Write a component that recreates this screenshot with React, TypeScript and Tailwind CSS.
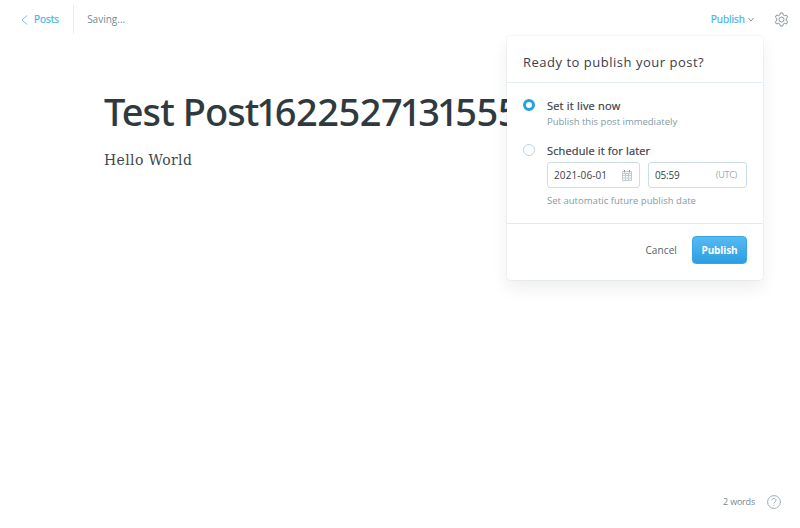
import React from 'react';

function GearIcon() {
  return (
    <svg width="15" height="15" viewBox="0 0 24 24" fill="none" stroke="#738a94" strokeWidth="1.4" strokeLinejoin="round">
      <path d="M9.500 4.500L10 1.500h4l.5 3 2.500 1.400 2.900-1.100 2 3.500-2.400 1.900v3.600l2.400 1.900-2 3.500-2.900-1.100-2.500 1.400-.5 3h-4l-.5-3L7 18.100l-2.900 1.100-2-3.500 2.400-1.900v-3.600L2.100 8.300l2-3.500L7 5.900z" />
      <circle cx="12" cy="12" r="4" />
    </svg>
  );
}

function CalendarIcon() {
  return (
    <svg width="10" height="11" viewBox="0 0 10 11" fill="none" stroke="#c0ccd2" strokeWidth="1">
      <path d="M.5 1.500h9v9h-9zM.5 3.500h9M3.500 4v6M6.500 4v6M1 5.500h8M1 8h8" />
      <path d="M2.500 0v2.500M7.500 0v2.500" stroke="#8fa1aa" />
    </svg>
  );
}

// Kerns the figure one tighter against its neighbours.
function Headline({ text }: { text: string }) {
  return (
    <h1 className="whitespace-nowrap font-['Noto_Sans','Open_Sans',sans-serif] text-[38px] font-medium leading-[52px] tracking-[-0.95px] text-[#303a3e]">
      {text.split(/(?=\d)|(?=t\d)/).map((part, index, parts) => {
        const beforeOne = parts[index + 1] === '1';
        if (part === '1') return <span key={index} className="tracking-[-3.400px]">{part}</span>;
        if (beforeOne) return <span key={index} className="tracking-[-2.900px]">{part}</span>;
        return <span key={index} className={/\d/.test(part) ? 'tracking-[-0.500px]' : 'tracking-[-0.950px]'}>{part}</span>;
      })}
    </h1>
  );
}

function PublishMenu() {
  return (
    <section className="absolute left-[507px] top-[36px] flex h-[244px] w-[256px] flex-col rounded-[4px] bg-white text-[#394047] shadow-[0_0_0_1px_rgba(99,114,130,0.06),0_8px_16px_rgba(27,39,51,0.08)]">
      <header className="flex h-[47px] items-center border-b border-[#e3edf3] px-4 pt-[5px]">
        <h2 className="text-[13px] leading-5 tracking-[0.51px]">Ready to publish your post?</h2>
      </header>
      <div className="flex h-[141px] flex-col border-b border-[#e3ebf0] px-4 pt-[15px]">
        <div className="flex h-[46px] gap-3">
          <span className="mt-px h-3 w-3 rounded-full border-[3px] border-[#26a0e5] bg-white" />
          <div className="flex flex-col">
            <span className="text-[11px] leading-[15px] tracking-[0.2px] [-webkit-text-stroke:0.2px_#394047]">Set it live now</span>
            <span className="mt-[2px] text-[9.500px] leading-[14px] text-[#829aa6]">Publish this post immediately</span>
          </div>
        </div>
        <div className="flex gap-3">
          <span className="h-3 w-3 shrink-0 rounded-full border border-[#bdd5e4] bg-white" />
          <div className="flex flex-col">
            <span className="-mt-px text-[11px] leading-[15px] tracking-[0.14px] [-webkit-text-stroke:0.2px_#394047]">Schedule it for later</span>
            <div className="mt-[4px] flex gap-2 text-[10px]">
              <div className="flex h-[26px] w-[93px] items-center justify-between rounded-[3px] border border-[#cadde8] pl-[6px] pr-[7px]">
                <span className="tracking-[0.1px]">2021-06-01</span>
                <CalendarIcon />
              </div>
              <div className="flex h-[26px] w-[99px] items-center justify-between rounded-[3px] border border-[#cadde8] pl-[6px] pr-[9px]">
                <span className="tracking-[-0.2px]">05:59</span>
                <span className="pb-px text-[9px] tracking-[-0.25px] text-[#9aabb3]">(UTC)</span>
              </div>
            </div>
            <span className="mt-[6px] text-[9.500px] leading-[14px] tracking-[0.02px] text-[#829aa6]">Set automatic future publish date</span>
          </div>
        </div>
      </div>
      <footer className="flex items-start justify-end pr-4 pt-3">
        <button className="mr-[15px] h-7 text-[10px] tracking-[0.1px] text-[#526169]">Cancel</button>
        <button className="h-7 w-[55px] rounded-[4px] border border-[#3aa5e3] bg-linear-to-b from-[#56b9f2] to-[#289fe3] text-[10px] font-bold tracking-[-0.12px] text-white">Publish</button>
      </footer>
    </section>
  );
}

export default function App() {
  return (
    <div className="relative flex h-[528px] w-[800px] flex-col overflow-hidden bg-white font-['Open_Sans','Noto_Sans',sans-serif]">
      <header className="flex h-[39px] shrink-0 items-center pl-[21px] pr-[11px] text-[10px]">
        <a className="flex items-center gap-[6px] text-[#3eb0ef] [-webkit-text-stroke:0.2px_#3eb0ef]">
          <svg width="7" height="10" viewBox="0 0 7 10" fill="none" stroke="#65bff1" strokeWidth="0.9"><path d="M6.200.4L1 5l5.200 4.600" /></svg>
          <span>Posts</span>
        </a>
        <span className="ml-[14px] h-[29px] w-px bg-[#e3edf3]" />
        <span className="ml-[13px] text-[#738a94]">Saving...</span>
        <button className="ml-auto mr-5 flex items-center gap-[3px] text-[#3eb0ef] [-webkit-text-stroke:0.2px_#3eb0ef]">
          <span>Publish</span>
          <svg width="6" height="5" viewBox="0 0 6 5" fill="none" stroke="#738a94" strokeWidth="0.9"><path d="M.4 1L3 4l2.600-3" /></svg>
        </button>
        <GearIcon />
      </header>
      <main className="flex flex-1 flex-col pl-[104px] pt-[46px]">
        <Headline text="Test Post1622527131555" />
        <p className="mt-[11px] font-['DejaVu_Serif_Condensed','DejaVu_Serif',serif] text-[15.500px] leading-6 tracking-[0.4px] text-[#3b474c]">Hello World</p>
      </main>
      <footer className="flex h-[52px] shrink-0 items-center justify-end gap-3 pr-[19px] text-[9px] text-[#738a94]">
        <span className="tracking-[-0.2px]">2 words</span>
        <svg width="14" height="14" viewBox="0 0 14 14" fill="none" stroke="#829aa6" strokeWidth="0.8">
          <circle cx="7" cy="7" r="6.400" />
          <path d="M5 5.500C5 2.900 9 2.900 9 5.300C9 6.900 7 6.600 7 8.500M7 9.700v1" />
        </svg>
      </footer>
      <PublishMenu />
    </div>
  );
}
